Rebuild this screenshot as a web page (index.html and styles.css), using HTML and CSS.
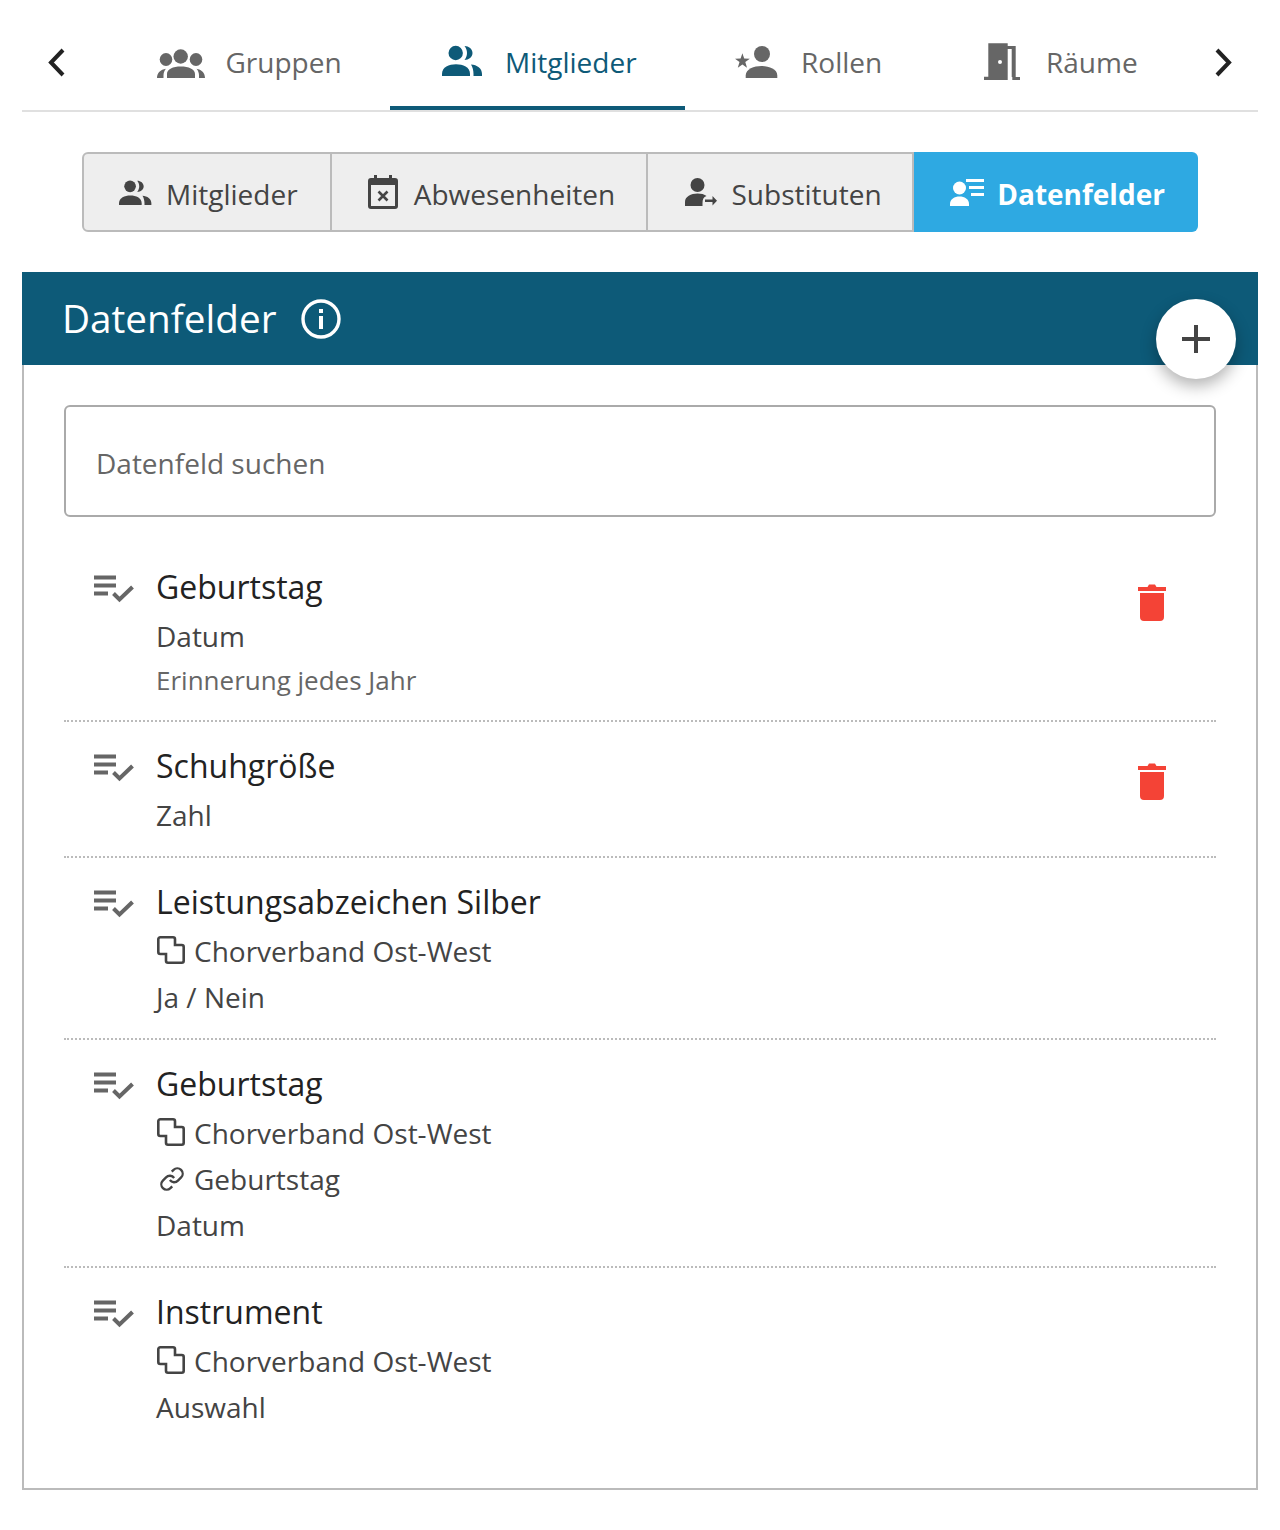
FILE: index.html
```html
<!DOCTYPE html>
<html lang="de">
<head>
<meta charset="utf-8">
<title>Datenfelder</title>
<link rel="stylesheet" href="styles.css">
</head>
<body>
<svg class="sprites" width="0" height="0" aria-hidden="true">
  <defs>
    <symbol id="people" viewBox="0 0 42 32">
      <circle cx="13.700" cy="9" r="7.200"/>
      <path d="M22.500 2c4.300 0 8 3 8 7s-3.700 7-8 7c1.500-2 2.500-4.300 2.500-7s-1-5-2.500-7z"/>
      <path d="M0 32v-2C0 23 7 20.300 14 20.300S28 23 28 30v2z"/>
      <path d="M29 20.500c6 .5 11 3.500 11 9.500v2h-8.500v-2c0-4-1-7-2.500-9.500z"/>
    </symbol>
    <symbol id="rowicon" viewBox="0 0 40 30">
      <path d="M0 .5h22v4H0zM0 8.500h22v4H0zM0 16.500h14v4H0z"/>
      <path d="M19.500 18.500l6 6L38.500 12" fill="none" stroke="#666" stroke-width="4"/>
    </symbol>
    <symbol id="copy" viewBox="0 0 30 30">
      <path d="M3.300 1.300H16a2 2 0 0 1 2 2V9h6.700a2 2 0 0 1 2 2v13.700a2 2 0 0 1-2 2H11a2 2 0 0 1-2-2V18H3.300a2 2 0 0 1-2-2V3.300a2 2 0 0 1 2-2z" fill="none" stroke="#444" stroke-width="2.600"/>
    </symbol>
    <symbol id="chain" viewBox="0 0 24 24">
      <path d="M10 13a5 5 0 0 0 7.540.54l3-3a5 5 0 0 0-7.070-7.070l-1.720 1.710M14 11a5 5 0 0 0-7.540-.54l-3 3a5 5 0 0 0 7.070 7.070l1.710-1.710" fill="none" stroke="#444" stroke-width="2.200"/>
    </symbol>
    <symbol id="trash-can" viewBox="0 0 28 40">
      <path d="M0 5h9.500L11 2.500h6L18.500 5H28v4H0zM2 11h24v24a4 4 0 0 1-4 4H6a4 4 0 0 1-4-4z" fill="#f44336"/>
    </symbol>
  </defs>
</svg>
<nav class="tabs">
  <button class="arrow" aria-label="Zurück"><svg viewBox="0 0 20 32" width="20" height="32"><path d="M16 4 4 16.500 16 29" fill="none" stroke="#222" stroke-width="4"/></svg></button>
  <a class="tab tab-gruppen">
    <svg class="ti" width="48" height="32" viewBox="0 0 48 32"><circle cx="23.700" cy="10.500" r="7.200"/><ellipse cx="9" cy="13.500" rx="6.300" ry="6.500"/><ellipse cx="39" cy="13.500" rx="6.300" ry="6.500"/><path d="M10 32v-4c0-5 6-7.500 13.800-7.500S38 23 38 28v4zM0 32c0-5 3.500-8.500 9-9.300-1.500 1.500-2.500 4-2.500 6.500V32zM48 32c0-5-3.500-8.500-8.500-9.300 1.500 1.500 2.500 4 2.500 6.500V32z"/></svg>
    <span>Gruppen</span>
  </a>
  <a class="tab tab-mitglieder active">
    <svg class="ti" width="42" height="32"><use href="#people"/></svg>
    <span>Mitglieder</span>
  </a>
  <a class="tab tab-rollen">
    <svg class="ti" width="44" height="32" viewBox="0 0 44 32"><path d="M7.400 7.300l1.800 5.200 5.600.2-4.500 3.400 1.700 5.600-4.600-3.300-4.600 3.300 1.700-5.600L0 12.700l5.600-.2z"/><circle cx="27" cy="8" r="8"/><path d="M10.700 32v-2.500C10.700 23 19 20 26.500 20s15.800 3 15.800 9.500V32z"/></svg>
    <span>Rollen</span>
  </a>
  <a class="tab tab-raeume">
    <svg class="ti" width="36" height="38" viewBox="0 0 36 38"><path d="M4.300.3h19.400v33.400H4.300zM0 33.700h23.700V37H0zM23.700 3h8v31H36v3h-7.700v-3h-.6V6h-4zM16 17a2 2 0 1 0 0 4 2 2 0 0 0 0-4z" fill-rule="evenodd"/></svg>
    <span>Räume</span>
  </a>
  <button class="arrow" aria-label="Weiter"><svg viewBox="0 0 20 32" width="20" height="32"><path d="M4 4l12 12.500L4 29" fill="none" stroke="#222" stroke-width="4"/></svg></button>
</nav>

<div class="subtabs">
  <a class="subtab st-1">
    <svg width="34" height="26"><use href="#people"/></svg>
    <span>Mitglieder</span>
  </a>
  <a class="subtab st-2">
    <svg width="30" height="34" viewBox="0 0 30 34"><path d="M6 0h3v3h12V0h3v3h3a3 3 0 0 1 3 3v25a3 3 0 0 1-3 3H3a3 3 0 0 1-3-3V6a3 3 0 0 1 3-3h3zM3 10v21h24V10z" fill-rule="evenodd"/><path d="M10.500 16.500l9 9m0-9l-9 9" stroke="#444" stroke-width="2.600" fill="none"/></svg>
    <span>Abwesenheiten</span>
  </a>
  <a class="subtab st-3">
    <svg width="32" height="28" viewBox="0 0 32 28"><ellipse cx="12.500" cy="7" rx="7" ry="7"/><path d="M0 28v-4c0-5.500 6-8.500 12.500-8.500 3.500 0 7 .8 9 2.500-3 1-4 3.500-4 7v3zM20 21.500h7.500V18l4.500 4.800-4.500 4.800v-3.600H20z"/></svg>
    <span>Substituten</span>
  </a>
  <a class="subtab st-4 selected">
    <svg width="34" height="28" viewBox="0 0 34 28"><circle cx="9.500" cy="10" r="6.500"/><path d="M0 28v-2c0-5 4.500-7.500 9.500-7.500s9.500 2.500 9.500 7.500v2z"/><path d="M16 1h18v3H16zM19 8h15v3H19zM21 15h13v3H21z"/></svg>
    <span>Datenfelder</span>
  </a>
</div>

<section class="panel">
  <header class="panel-head">
    <h1>Datenfelder</h1>
    <svg class="info" width="40" height="40" viewBox="0 0 40 40"><circle cx="20" cy="20" r="18" fill="none" stroke="#fff" stroke-width="3.400"/><path d="M18 10h4v4h-4zM18 17h4v13h-4z" fill="#fff"/></svg>
    <button class="fab" aria-label="Hinzufügen"><svg width="28" height="28" viewBox="0 0 28 28"><path d="M12 0h4v12h12v4H16v12h-4V16H0v-4h12z" fill="#444"/></svg></button>
  </header>
  <div class="panel-body">
    <div class="search">Datenfeld suchen</div>
    <ul class="list">
      <li class="row row-a">
        <svg class="ri" width="40" height="30"><use href="#rowicon"/></svg>
        <div class="rt">
          <div class="title">Geburtstag</div>
          <div class="line">Datum</div>
          <div class="note">Erinnerung jedes Jahr</div>
        </div>
        <svg class="trash" width="28" height="40"><use href="#trash-can"/></svg>
      </li>
      <li class="row row-b">
        <svg class="ri" width="40" height="30"><use href="#rowicon"/></svg>
        <div class="rt">
          <div class="title">Schuhgröße</div>
          <div class="line">Zahl</div>
        </div>
        <svg class="trash" width="28" height="40"><use href="#trash-can"/></svg>
      </li>
      <li class="row row-c">
        <svg class="ri" width="40" height="30"><use href="#rowicon"/></svg>
        <div class="rt">
          <div class="title">Leistungsabzeichen Silber</div>
          <div class="line withicon"><svg width="30" height="30"><use href="#copy"/></svg>Chorverband Ost-West</div>
          <div class="line">Ja / Nein</div>
        </div>
      </li>
      <li class="row row-d">
        <svg class="ri" width="40" height="30"><use href="#rowicon"/></svg>
        <div class="rt">
          <div class="title">Geburtstag</div>
          <div class="line withicon"><svg width="30" height="30"><use href="#copy"/></svg>Chorverband Ost-West</div>
          <div class="line withicon"><svg class="chain" width="30" height="30" viewBox="-2 -2 28 28"><use href="#chain" width="24" height="24"/></svg>Geburtstag</div>
          <div class="line">Datum</div>
        </div>
      </li>
      <li class="row row-e">
        <svg class="ri" width="40" height="30"><use href="#rowicon"/></svg>
        <div class="rt">
          <div class="title">Instrument</div>
          <div class="line withicon"><svg width="30" height="30"><use href="#copy"/></svg>Chorverband Ost-West</div>
          <div class="line">Auswahl</div>
        </div>
      </li>
    </ul>
  </div>
</section>
</body>
</html>
```
FILE: styles.css
```css
* { box-sizing: border-box; }
html, body { margin: 0; padding: 0; background: #fff; }
body {
  font-family: "Open Sans", "Noto Sans", sans-serif;
  color: #222;
  padding: 0 22px;
  height: 1530px;
}
.sprites { position: absolute; }
ul { list-style: none; margin: 0; padding: 0; }

.tabs {
  display: flex;
  height: 112px;
  padding-top: 14px;
  border-bottom: 2px solid #e0e0e0;
}
.arrow {
  background: none;
  border: 0;
  padding: 0;
  width: 92px;
  height: 96px;
  display: flex;
  align-items: center;
  padding-left: 25px;
}
.arrow:last-child { justify-content: flex-end; width: 46px; padding: 0 25px 0 0; margin-left: auto; }
.tab {
  display: flex;
  align-items: center;
  height: 96px;
  font-size: 28px;
  color: #666;
  fill: #666;
  margin-bottom: -2px;
}
.tab-gruppen { width: 276px; padding: 0 0 0 43px; gap: 20.5px; }
.tab-mitglieder { width: 295px; padding-left: 52px; gap: 21px; }
.tab-rollen { width: 295px; padding-left: 50px; gap: 22px; }
.tab-raeume { width: 230px; padding-left: 4px; gap: 26px; }
.tab.active {
  color: #0e5a78;
  fill: #0e5a78;
  box-shadow: inset 0 -4px 0 #0e5a78;
}
.ti { flex: none; }
.tab-mitglieder .ti { margin-top: -4px; }

.subtabs {
  display: flex;
  margin: 40px 60px;
  height: 80px;
}
.subtab {
  display: flex;
  align-items: center;
  gap: 13px;
  font-size: 28px;
  color: #444;
  fill: #444;
  background: #eee;
  border: 2px solid #bbb;
  border-left-width: 0;
}
.subtab span { margin-top: 4px; }
.st-1 { width: 250px; padding-left: 35px; border-left-width: 2px; border-radius: 6px 0 0 6px; }
.st-2 { width: 317px; padding-left: 36px; gap: 16px; }
.st-3 { width: 266px; padding-left: 37px; gap: 14px; }
.st-4 { width: 284px; padding-left: 36px; gap: 13px; }
.subtab.selected {
  background: #2ea9e2;
  border-color: #2ea9e2;
  color: #fff;
  fill: #fff;
  font-weight: 700;
  border-radius: 0 6px 6px 0;
  border-width: 0;
}

.panel {
  height: 1218px;
  border: 2px solid #bbb;
  border-top: 0;
}
.panel-head {
  position: relative;
  display: flex;
  align-items: center;
  gap: 24px;
  height: 93px;
  margin: 0 -2px;
  padding: 0 0 0 40px;
  background: #0d5a78;
  color: #fff;
}
.panel-head h1 { margin: 0; font-size: 38.7px; font-weight: 400; line-height: 1; }
.fab {
  position: absolute;
  right: 22px;
  top: 27px;
  width: 80px;
  height: 80px;
  padding: 0;
  border: 0;
  border-radius: 50%;
  background: #fff;
  box-shadow: 0 7px 16px rgba(0, 0, 0, .3);
  display: flex;
  align-items: center;
  justify-content: center;
}
.panel-body { padding: 40px 40px 0; }
.search {
  height: 112px;
  border: 2px solid #aaa;
  border-radius: 6px;
  padding: 4px 0 0 30px;
  display: flex;
  align-items: center;
  font-size: 28px;
  color: #666;
}
.list { margin-top: 26px; }
.row {
  display: flex;
  align-items: flex-start;
  padding: 22px 50px 0 30px;
  border-bottom: 2px dotted #bbb;
}
.row:last-child { border-bottom: 0; }
.row-a { height: 179px; }
.row-b { height: 136px; }
.row-c { height: 182px; }
.row-d { height: 228px; }
.row-e { height: 180px; }
.ri { flex: none; fill: #666; margin: 10px 22px 0 0; }
.rt { flex: 1; }
.title { font-size: 32px; line-height: 44px; color: #222; }
.line {
  font-size: 28px;
  line-height: 46px;
  color: #444;
  margin-top: 4px;
}
.line + .line { margin-top: 0; }
.withicon { display: flex; align-items: center; gap: 7px; }
.withicon svg { flex: none; margin-left: 1px; }
.note { font-size: 26px; line-height: 40px; color: #666; margin-top: 1px; }
.trash { flex: none; margin-top: 17px; }
```
